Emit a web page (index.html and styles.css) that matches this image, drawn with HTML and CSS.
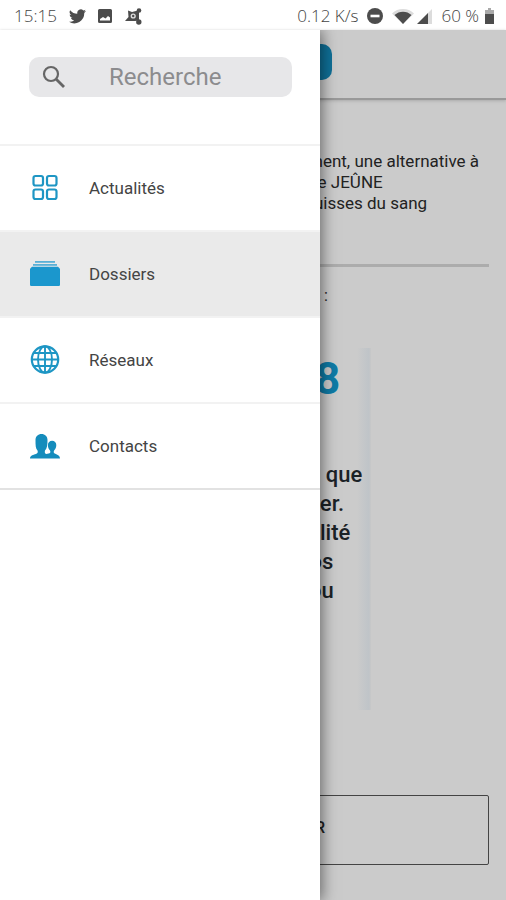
FILE: index.html
```html
<!DOCTYPE html>
<html lang="fr">
<head>
<meta charset="utf-8">
<meta name="viewport" content="width=device-width, initial-scale=1">
<title>Menu</title>
<link rel="stylesheet" href="styles.css">
</head>
<body>
<div class="status">
  <div class="group">
    <span>15:15</span>
    <svg width="17" height="15" viewBox="0 0 24 20"><path d="M24 2.400a9 9 0 0 1-2.800.8A5 5 0 0 0 23.300.5a10 10 0 0 1-3.100 1.200 4.900 4.900 0 0 0-8.400 4.500A14 14 0 0 1 1.700 1a4.900 4.900 0 0 0 1.500 6.600 5 5 0 0 1-2.200-.6c0 2.300 1.500 4.400 3.900 4.900a5 5 0 0 1-2.200.1 4.900 4.900 0 0 0 4.600 3.400A10 10 0 0 1 0 17.500 14 14 0 0 0 21.500 5a10 10 0 0 0 2.500-2.600z"/></svg>
    <svg width="14" height="14" viewBox="0 0 14 14"><path fill-rule="evenodd" d="M1.500 0h11A1.500 1.500 0 0 1 14 1.500v11a1.500 1.500 0 0 1-1.500 1.500h-11A1.500 1.500 0 0 1 0 12.500v-11A1.500 1.500 0 0 1 1.500 0zM2 11.500h10V8.500L10 7 7.500 9.500 5 8 2 10z"/></svg>
    <svg width="18" height="17" viewBox="0 0 18 17"><path d="M4 2.500l4 1.500 6-1.500 1 10-4 .5-10 0 3.500-4z"/><path d="M14 3v11" fill="none" stroke="#4c4c4c" stroke-width="2"/><circle cx="15" cy="2.500" r="2.300"/><circle cx="14.800" cy="14" r="2.700"/><circle cx="9.200" cy="8" r="2.600" fill="#ddd"/><circle cx="9.200" cy="8" r="1.200"/></svg>
  </div>
  <div class="group right">
    <span>0.12 K/s</span>
    <svg width="16" height="16" viewBox="0 0 16 16"><circle cx="8" cy="8" r="8"/><path d="M3.500 6.700h9v2.600h-9z" fill="#fff"/></svg>
    <svg width="40" height="15" viewBox="0 0 40 15"><path d="M0 4.500a16 16 0 0 1 22 0L11 15zM25 15L40 0v15z" fill="#dcdcdc"/><path d="M2.500 6a12.500 12.500 0 0 1 17 0L11 15zM25 15L36 4v11z"/></svg>
    <span>60 %</span>
    <svg class="battery" width="9" height="16" viewBox="0 0 9 16"><path d="M3 0h3v2h3v4H0V2h3z" fill="#aaa"/><path d="M0 6h9v10H0z"/></svg>
  </div>
</div>
<div class="screen">
  <main class="page">
    <header class="bar"><span class="pill"></span></header>
    <div class="content">
      <p class="intro">ment, une alternative à<br>de JEÛNE<br>fuisses du sang</p>
      <hr>
      <p class="note">:</p>
      <section class="card">
        <p class="number">8</p>
        <p class="quote">n. que<br>nier.<br>bilité<br>ros<br>tou</p>
      </section>
      <button class="more" type="button">R</button>
    </div>
  </main>
  <aside class="drawer">
    <label class="search">
      <svg width="24" height="24" viewBox="0 0 24 24" fill="none" stroke="#666" stroke-width="2.200"><circle cx="9" cy="9" r="7"/><path d="M14 14l8 8" stroke-width="2.800"/></svg>
      <input type="search" placeholder="Recherche" aria-label="Recherche">
    </label>
    <nav class="menu">
      <a href="#actualites">
        <svg width="32" height="32" viewBox="0 0 32 32" fill="none" stroke="#1e96c4" stroke-width="2.200"><rect x="4.500" y="4" width="9.500" height="9.500" rx="2"/><rect x="18" y="4" width="9.500" height="9.500" rx="2"/><rect x="4.500" y="17.500" width="9.500" height="9.500" rx="2"/><rect x="18" y="17.500" width="9.500" height="9.500" rx="2"/></svg>
        Actualités</a>
      <a class="active" href="#dossiers">
        <svg width="32" height="32" viewBox="0 0 32 32" fill="#1b97cd"><path d="M6 3h20v1.800H6z" opacity=".7"/><path d="M4 6h24v1.800H4z" opacity=".7"/><path d="M3 8.800h26l2 2v16a1.200 1.200 0 0 1-1.200 1.200H2.200A1.200 1.200 0 0 1 1 26.800v-16z"/></svg>
        Dossiers</a>
      <a href="#reseaux">
        <svg width="32" height="32" viewBox="0 0 32 32" fill="none" stroke="#1e96c4" stroke-width="1.900"><circle cx="16" cy="15.500" r="13.200" stroke-width="2.200"/><ellipse cx="16" cy="15.500" rx="7" ry="13.200"/><path d="M16 2.300v26.400M2.800 15.500h26.400M5 9h22M5 22h22"/></svg>
        Réseaux</a>
      <a href="#contacts">
        <svg width="32" height="32" viewBox="0 0 32 32" fill="#158cbc"><path d="M1 28.500c0-3 3-3.500 6-4.500 2-.8 2-2 1.500-3.500C6.500 18.500 6.500 15 6.500 10c0-3.500 2.500-6 6-6s6 2.500 6 6c0 5-.5 8.500-2.500 10.500-.4 1.700-.3 2.900 1.200 3.500 1.800-.2 3.300-.5 4-1.200.3-.8.200-1.600-.2-2.300-1.500-1.500-2.100-3.500-2.100-5.500 0-2.500 1.800-4.200 4.200-4.200s4.200 1.700 4.200 4.200c0 2-.7 4-2.200 5.500-.5 1-.5 2.200.2 2.800C28 24.600 31 25.500 31 28.500z"/></svg>
        Contacts</a>
    </nav>
  </aside>
</div>
</body>
</html>
```
FILE: styles.css
```css
* { box-sizing: border-box; }
body {
  margin: 0;
  min-height: 100vh;
  display: flex;
  flex-direction: column;
  background: #fff;
  font-family: Roboto, "Liberation Sans", sans-serif;
  color: #222;
}
p { margin: 0; }
.status {
  display: flex;
  align-items: center;
  justify-content: space-between;
  height: 30px;
  padding: 2px 12px 0 14px;
  font: 300 17px/24px "Open Sans", "Noto Sans", sans-serif;
  color: #444;
  fill: #4c4c4c;
}
.group {
  display: flex;
  align-items: center;
  gap: 12px;
}
.group svg { flex: none; }
.right { gap: 9px; }
.right .battery { margin-left: -3px; }
.screen {
  position: relative;
  flex: 1;
  display: flex;
}
.page {
  flex: 1;
  background: #cbcbcb;
}
.bar {
  display: flex;
  justify-content: center;
  padding: 14px 0 18px;
  border-bottom: 2px solid #999;
  box-shadow: 0 1px 3px #aaa;
}
.pill {
  width: 158px;
  height: 36px;
  border-radius: 10px;
  background: #0f7098;
}
.content {
  display: flex;
  flex-direction: column;
  padding: 51px 17px 36px;
}
.intro {
  padding-left: 291px;
  font-size: 17px;
  line-height: 21px;
  white-space: nowrap;
}
hr {
  width: 100%;
  height: 3px;
  margin: 50px 0 18px;
  border: 0;
  background: #acacac;
}
.note {
  padding-left: 307px;
  font-size: 16px;
  line-height: 21px;
}
.card {
  width: 354px;
  height: 362px;
  margin-top: 42px;
  padding: 8px 0 0 285px;
  background: linear-gradient(90deg, transparent 340px, #bfc4c8 352px, #c8c8c8 354px);
}
.number {
  padding-left: 13px;
  font-size: 44px;
  line-height: 46px;
  font-weight: 700;
  color: #0f7ba6;
}
.quote {
  margin-top: 58px;
  font-size: 22px;
  line-height: 29px;
  font-weight: 500;
  white-space: nowrap;
  color: #1b2227;
}
.more {
  height: 70px;
  margin-top: 85px;
  padding: 0 0 4px 297px;
  border: 1px solid #444;
  border-radius: 2px;
  background: none;
  font: 500 16px/20px Roboto, sans-serif;
  text-align: left;
  color: #222;
}
.drawer {
  position: absolute;
  inset: 0 auto 0 0;
  width: 320px;
  background: #fff;
  box-shadow: 2px 0 14px rgba(0, 0, 0, 0.5);
  clip-path: inset(0 -30px 0 0);
}
.search {
  display: flex;
  align-items: center;
  gap: 43px;
  height: 40px;
  margin: 27px 28px 47px 29px;
  padding: 0 13px;
  border-radius: 10px;
  background: #e7e7e9;
}
.search svg { flex: none; }
.search input {
  flex: 1;
  min-width: 0;
  padding: 0;
  border: 0;
  outline: 0;
  background: none;
  font: 400 24px/30px Roboto, sans-serif;
  color: #555;
}
.search input::placeholder { color: #8c8c8e; opacity: 1; }
.menu { border-bottom: 2px solid #e2e2e2; }
.menu a {
  display: flex;
  align-items: center;
  gap: 28px;
  height: 86px;
  padding-left: 29px;
  border-top: 2px solid #f2f2f2;
  font-size: 17px;
  line-height: 20px;
  color: #444;
  text-decoration: none;
}
.menu .active { background: #eaeaea; }
```
